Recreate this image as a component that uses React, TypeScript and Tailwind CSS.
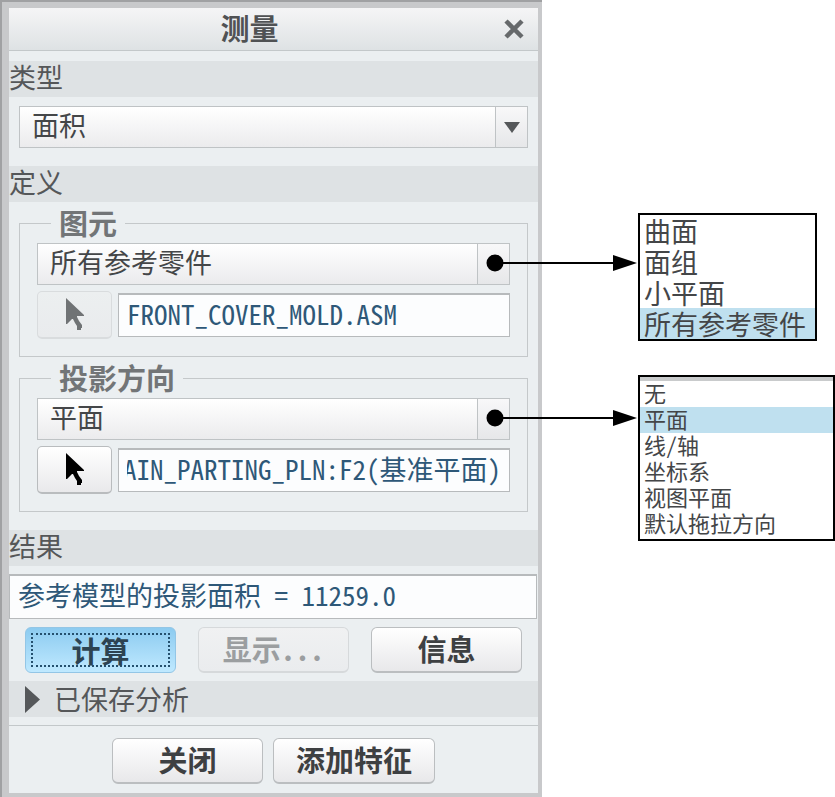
import { useEffect, useRef } from "react";
import type { ReactNode } from "react";

const raised = "border border-[#bfc3c5] bg-linear-to-b from-[#ffffff] to-[#ebebed]";

function Band({ children }: { children: ReactNode }) {
  return (
    <h2 className="h-9 bg-[#dee2e4] text-[27px] leading-8 text-[#555759]">{children}</h2>
  );
}

function Combo({
  label,
  options,
  value,
  callout = false,
}: {
  label: string;
  options: string[];
  value: string;
  callout?: boolean;
}) {
  return (
    <div className="relative h-[42px]">
      <select
        aria-label={label}
        defaultValue={value}
        className={`${raised} h-full w-full appearance-none pr-9 pb-1 pl-3 text-[27px] leading-9 text-[#444648] outline-none`}
      >
        {options.map((o) => (
          <option key={o}>{o}</option>
        ))}
      </select>
      <span className="pointer-events-none absolute inset-y-px right-px flex w-8 items-center justify-center border-l border-[#bfc3c5] bg-linear-to-b from-[#f8f8f9] to-[#e6e7e9]">
        {!callout && (
          <svg width="16" height="11" viewBox="0 0 16 11" aria-hidden="true">
            <path d="M0 0h16L8 11z" fill="#55585a" />
          </svg>
        )}
      </span>
      {callout && (
        <svg
          className="pointer-events-none absolute top-[11px] -right-32 z-10"
          width="152"
          height="18"
          viewBox="0 0 152 18"
          aria-hidden="true"
        >
          <circle cx="9" cy="9" r="8.5" fill="#000" />
          <path d="M9 9H130" stroke="#000" strokeWidth="2" />
          <path d="M127 1l24 8-24 8z" fill="#000" />
        </svg>
      )}
    </div>
  );
}

function PickButton({ label, disabled = false }: { label: string; disabled?: boolean }) {
  return (
    <button
      type="button"
      aria-label={label}
      disabled={disabled}
      className="flex h-12 w-[75px] shrink-0 items-center justify-center rounded-[5px] border border-b-2 border-[#b9bcbe] bg-linear-to-b from-white to-[#e9e9eb] text-black disabled:border-[#d9dcde] disabled:from-[#eceff0] disabled:to-[#e9ebed] disabled:text-[#707375]"
    >
      <svg width="20" height="33" viewBox="0 0 20 33" aria-hidden="true">
        <path d="M1 0v26h1l5-5h1l2 4 2 3v4h4v-2h1v-3l-3-4-2-4v-1h7v-1z" fill="currentColor" />
      </svg>
    </button>
  );
}

function Reference({ label, value }: { label: string; value: string }) {
  const ref = useRef<HTMLInputElement>(null);
  useEffect(() => {
    const el = ref.current;
    if (el) el.scrollLeft = el.scrollWidth;
  }, []);
  return (
    <input
      ref={ref}
      aria-label={label}
      defaultValue={value}
      className="h-11 min-w-0 flex-1 border border-t-2 border-[#b7babc] bg-[#fcfdfe] px-2 pb-1 font-['Noto_Sans_Mono_CJK_SC','Liberation_Mono','Noto_Sans_CJK_SC',monospace] text-[27px] text-[#2e5878] outline-none"
    />
  );
}

function Group({ title, children }: { title: string; children: ReactNode }) {
  return (
    <fieldset className="mx-[10px] mt-[6px] border border-[#c4c8ca] px-[17px] pt-[5px] pb-[17px]">
      <legend className="ml-[14px] px-2 pb-0.5 text-[29px] leading-[28px] font-bold text-[#727577]">{title}</legend>
      {children}
    </fieldset>
  );
}

const pushButton =
  "h-[46px] rounded-[6px] border border-b-2 border-[#bbbec0] bg-linear-to-b from-white to-[#e8e8ea] pb-1 text-[29px] leading-9 font-bold text-[#3e4042] disabled:border-[#d6d9db] disabled:from-[#f0f1f2] disabled:to-[#eaecee] disabled:text-[#9b9ea0]";

const entities = ["曲面", "面组", "小平面", "所有参考零件"];
const directions = ["无", "平面", "线/轴", "坐标系", "视图平面", "默认拖拉方向"];

export default function App() {
  return (
    <main className="flex items-start bg-white font-['Noto_Sans_Mono_CJK_SC','Noto_Sans_CJK_SC',sans-serif]">
      <section className="min-w-0 flex-1 border-t-2 border-l-2 border-[#a0a1a3] bg-[#c8c9cb] pt-[6px] pr-1 pb-[5px] pl-[7px]">
        <div className="bg-[#ebeff1] pb-[9px]">
          <header className="flex h-[43px] items-center border-b border-[#c3c8ca] bg-linear-to-b from-[#f5f5f6] to-[#dee2e4]">
            <h1 className="flex-1 pb-1 text-center text-[29px] leading-9 font-bold text-[#505254]">测量</h1>
            <button type="button" aria-label="关闭窗口" className="flex h-9 w-12 items-center justify-center">
              <svg width="20" height="20" viewBox="0 0 20 20" aria-hidden="true">
                <path d="M2 2l16 16M18 2L2 18" stroke="#66696b" strokeWidth="4.5" />
              </svg>
            </button>
          </header>

          <div className="mt-[10px]">
            <Band>类型</Band>
          </div>
          <div className="mx-[10px] mt-[9px]">
            <Combo label="类型" options={["面积"]} value="面积" />
          </div>

          <div className="mt-[18px]">
            <Band>定义</Band>
          </div>
          <Group title="图元">
            <Combo label="图元" options={entities} value="所有参考零件" callout />
            <div className="mt-[6px] flex items-center gap-[6px]">
              <PickButton label="选取图元" disabled />
              <Reference label="图元参考" value="FRONT_COVER_MOLD.ASM" />
            </div>
          </Group>
          <Group title="投影方向">
            <Combo label="投影方向" options={directions} value="平面" callout />
            <div className="mt-[6px] flex items-center gap-[6px]">
              <PickButton label="选取方向" />
              <Reference label="方向参考" value="AIN_PARTING_PLN:F2(基准平面)" />
            </div>
          </Group>

          <div className="mt-[18px]">
            <Band>结果</Band>
          </div>
          <output className="mt-2 mr-px block h-[45px] border border-t-2 border-[#b7babc] bg-[#fcfdfe] pl-2 text-[27px] leading-[38px] whitespace-pre text-[#2e5878]">
            参考模型的投影面积 = 11259.0
          </output>
          <div className="mt-2 flex justify-between pr-4 pl-4">
            <button
              type="button"
              className="h-[46px] w-[151px] rounded-[6px] border border-[#93c6e6] bg-linear-to-b from-[#8ccbf0] to-[#bfe9ff] p-[5px] text-[29px] leading-8 font-bold text-[#2d4352]"
            >
              <span className="flex h-full items-center justify-center border-2 border-dotted border-[#24506e]">
                计算
              </span>
            </button>
            <button type="button" disabled className={`${pushButton} w-[151px]`}>
              显示...
            </button>
            <button type="button" className={`${pushButton} w-[151px]`}>
              信息
            </button>
          </div>

          <div className="mt-2 flex h-9 items-center gap-[14px] bg-[#dee2e4] pl-4">
            <svg width="15" height="27" viewBox="0 0 15 27" aria-hidden="true">
              <path d="M0 0l15 13.5L0 27z" fill="#55585a" />
            </svg>
            <h2 className="text-[27px] leading-9 text-[#555759]">已保存分析</h2>
          </div>
          <div className="mt-2 flex justify-center gap-[10px] border-t border-[#c3c8ca] pt-3">
            <button type="button" className={`${pushButton} w-[151px]`}>
              关闭
            </button>
            <button type="button" className={`${pushButton} w-[162px]`}>
              添加特征
            </button>
          </div>
        </div>
      </section>

      <aside className="ml-24 w-[197px] shrink-0 pt-[213px] text-[#444648]">
        <ul className="w-[179px] border-2 border-black text-[27px] leading-[31px]">
          {entities.map((o) => (
            <li key={o} className={o === "所有参考零件" ? "bg-[#bfe0ef] pl-1 whitespace-nowrap" : "pl-1"}>
              {o}
            </li>
          ))}
        </ul>
        <ul className="mt-[34px] border-2 border-black pb-0.5 text-[22px] leading-[22px]">
          <li aria-hidden="true" className="h-1 bg-[#c9cbcc]" />
          {directions.map((o) => (
            <li key={o} className={o === "平面" ? "bg-[#bfe0ef] pb-1 pl-1" : "pb-1 pl-1"}>
              {o}
            </li>
          ))}
        </ul>
      </aside>
    </main>
  );
}
